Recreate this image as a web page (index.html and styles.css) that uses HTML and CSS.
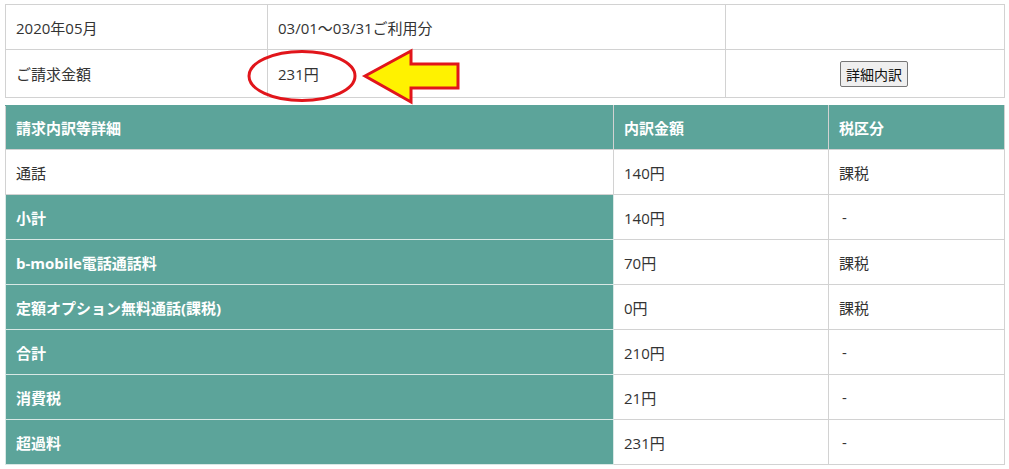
FILE: index.html
```html
<!DOCTYPE html>
<html lang="ja">

<head>
    <meta charset="UTF-8">
    <meta name="viewport" content="width=device-width, initial-scale=1.0">
    <title>ご請求金額</title>
    <link rel="stylesheet" href="styles.css">
</head>

<body>
    <div class="page">
        <div class="summary-wrap">
            <table class="summary">
                <colgroup>
                    <col class="col-label">
                    <col class="col-value">
                    <col class="col-action">
                </colgroup>
                <tr class="row-month">
                    <td>2020年05月</td>
                    <td>03/01～03/31ご利用分</td>
                    <td></td>
                </tr>
                <tr class="row-total">
                    <td>ご請求金額</td>
                    <td>231円</td>
                    <td class="action"><button class="detail-button">詳細内訳</button></td>
                </tr>
            </table>

            <svg class="marker" viewBox="0 0 480 70" xmlns="http://www.w3.org/2000/svg">
                <ellipse cx="63" cy="34" rx="53" ry="24.5" fill="none" stroke="#e1151b" stroke-width="3"></ellipse>
                <path d="M126 34 L172 9 L172 22 L219 22 L219 46 L172 46 L172 60 Z" fill="#fff200" stroke="#e1151b" stroke-width="3" stroke-linejoin="miter"></path>
            </svg>
        </div>

        <table class="details">
            <colgroup>
                <col class="col-item">
                <col class="col-amount">
                <col class="col-tax">
            </colgroup>
            <thead>
                <tr>
                    <th>請求内訳等詳細</th>
                    <th>内訳金額</th>
                    <th>税区分</th>
                </tr>
            </thead>
            <tbody>
                <tr>
                    <td>通話</td>
                    <td>140円</td>
                    <td>課税</td>
                </tr>
                <tr>
                    <th>小計</th>
                    <td>140円</td>
                    <td class="dash">-</td>
                </tr>
                <tr>
                    <th>b-mobile電話通話料</th>
                    <td>70円</td>
                    <td>課税</td>
                </tr>
                <tr>
                    <th>定額オプション無料通話(課税)</th>
                    <td>0円</td>
                    <td>課税</td>
                </tr>
                <tr>
                    <th>合計</th>
                    <td>210円</td>
                    <td class="dash">-</td>
                </tr>
                <tr>
                    <th>消費税</th>
                    <td>21円</td>
                    <td class="dash">-</td>
                </tr>
                <tr>
                    <th>超過料</th>
                    <td>231円</td>
                    <td class="dash">-</td>
                </tr>
            </tbody>
        </table>
    </div>
</body>

</html>
```

FILE: styles.css
```css
body {
    margin: 0;
    padding: 0;
    background: #fff;
    font-family: "Open Sans", "Noto Sans CJK JP", sans-serif;
    font-size: 15px;
    color: #333;
}

.page {
    padding: 4px 5px 0 5px;
    width: 1000px;
}

.summary-wrap {
    position: relative;
    margin-bottom: 7px;
}

table {
    width: 1000px;
    border-collapse: collapse;
    table-layout: fixed;
}

.summary td {
    border: 1px solid #d2d2d2;
    padding: 0 10px;
    vertical-align: middle;
}

.col-label {
    width: 262px;
}

.col-value {
    width: 458px;
}

.summary .row-month td {
    height: 44px;
}

.summary .row-total td {
    height: 47px;
}

.summary .action {
    padding-left: 114px;
}

.detail-button {
    font-family: "Noto Sans CJK JP", sans-serif;
    font-size: 14px;
    color: #111;
    background: #efefef;
    border: 1px solid #767676;
    border-radius: 2px;
    height: 26px;
    padding: 0 5px;
    line-height: 22px;
}

.marker {
    position: absolute;
    left: 234px;
    top: 38px;
    width: 480px;
    height: 70px;
}

.col-item {
    width: 608px;
}

.col-amount {
    width: 215px;
}

.details th,
.details td {
    height: 44px;
    padding: 0 10px;
    text-align: left;
    vertical-align: middle;
    border: 1px solid #d2d2d2;
}

.details thead th {
    height: 43px;
}

.details th {
    background: #5ca49a;
    color: #fff;
    font-weight: bold;
    border-color: #d8e8e5;
}

.details thead th {
    border-color: #d2d2d2;
    border-top-color: #5ca49a;
}

.details .dash {
    padding-left: 13px;
}
```
